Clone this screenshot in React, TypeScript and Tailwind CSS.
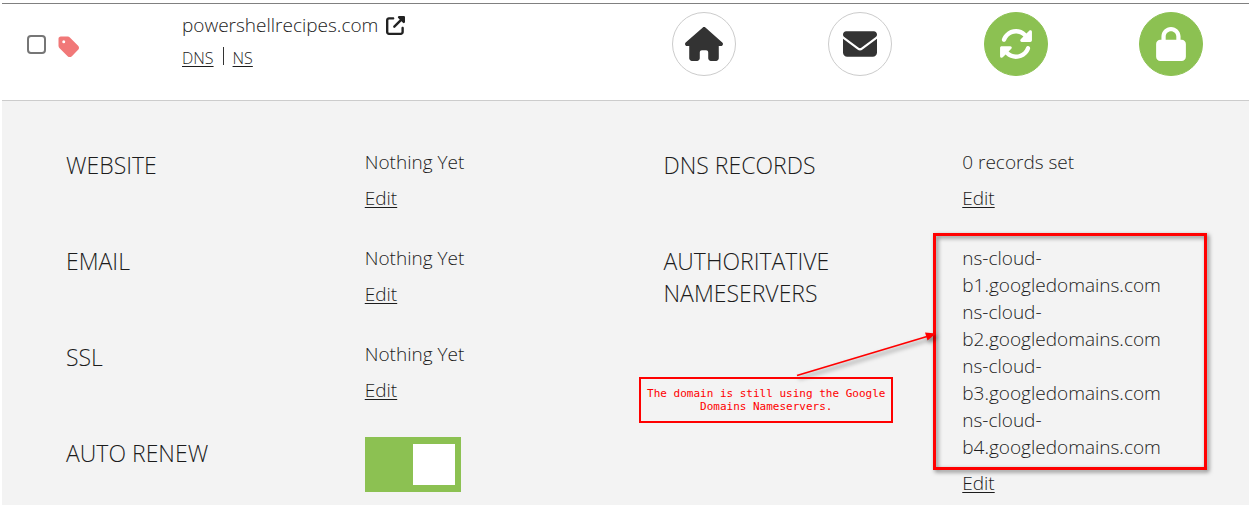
import { useState, type ReactNode } from "react";
import {
  FaEnvelope,
  FaHouse,
  FaLock,
  FaRotate,
  FaTag,
  FaUpRightFromSquare,
} from "react-icons/fa6";

const nameservers = [
  "ns-cloud-b1.googledomains.com",
  "ns-cloud-b2.googledomains.com",
  "ns-cloud-b3.googledomains.com",
  "ns-cloud-b4.googledomains.com",
];

function Shortcut({ label, filled, children }: { label: string; filled?: boolean; children: ReactNode }) {
  const tone = filled ? "border-[#8cc152] bg-[#8cc152] text-white" : "border-[#cccccc] bg-white text-[#333333]";
  return (
    <div className="flex flex-1 justify-center">
      <button
        type="button"
        aria-label={label}
        className={`flex size-16 items-center justify-center rounded-full border ${tone}`}
      >
        {children}
      </button>
    </div>
  );
}

function Row({ title, children }: { title: string; children: ReactNode }) {
  return (
    <section className="grid min-h-24 grid-cols-2 gap-x-19 last:min-h-0">
      <h2 className="text-[23px] leading-8">{title}</h2>
      <div className="text-[19px] leading-[27px]">{children}</div>
    </section>
  );
}

function Edit({ label }: { label: string }) {
  return (
    <a href="#edit" aria-label={`Edit ${label}`} className="mt-[9px] block w-fit underline underline-offset-2">
      Edit
    </a>
  );
}

export default function App() {
  const [selected, setSelected] = useState(false);
  const [autoRenew, setAutoRenew] = useState(true);

  return (
    <main className="ml-0.5 min-h-screen bg-[#f3f3f3] font-['Open_Sans',sans-serif] font-light text-[#1c1c1c]">
      <div className="bg-white pt-[3px]">
        <header className="flex border-t border-b border-t-[#808080] border-b-[#cccccc] bg-white pt-2 pb-6">
          <div className="flex w-1/2">
            <div className="flex w-[180px] gap-[11px] pt-[23px] pl-[25px]">
              <input
                type="checkbox"
                aria-label="Select powershellrecipes.com"
                checked={selected}
                onChange={(e) => setSelected(e.target.checked)}
                className="size-[19px] appearance-none rounded-[4px] border-2 border-[#767676] bg-white checked:bg-[#767676]"
              />
              <FaTag className="size-6 text-[#f17878]" />
            </div>
            <div>
              <a href="#domain" className="flex items-center gap-2 text-[19px] leading-[27px]">
                powershellrecipes.com
                <FaUpRightFromSquare className="size-[19px] text-[#222222]" />
              </a>
              <nav className="mt-[3px] flex items-center gap-[9px] text-base leading-8">
                <a href="#dns" className="underline underline-offset-2">DNS</a>
                <span className="-mt-1 h-[18px] w-px bg-[#333333]" />
                <a href="#ns" className="underline underline-offset-2">NS</a>
              </nav>
            </div>
          </div>
          <div className="flex w-1/2 pl-px">
            <Shortcut label="Website"><FaHouse className="h-[34px] w-[38px]" /></Shortcut>
            <Shortcut label="Email"><FaEnvelope className="size-[34px]" /></Shortcut>
            <Shortcut label="Auto renew" filled><FaRotate className="size-[34px]" /></Shortcut>
            <Shortcut label="Lock" filled><FaLock className="size-[34px]" /></Shortcut>
          </div>
        </header>
      </div>

      <div className="grid grid-cols-2 gap-x-19 px-16 pt-12">
        <div>
          <Row title="WEBSITE"><p>Nothing Yet</p><Edit label="website" /></Row>
          <Row title="EMAIL"><p>Nothing Yet</p><Edit label="email" /></Row>
          <Row title="SSL"><p>Nothing Yet</p><Edit label="SSL" /></Row>
          <Row title="AUTO RENEW">
            <button
              type="button"
              role="switch"
              aria-checked={autoRenew}
              aria-label="Auto renew"
              onClick={() => setAutoRenew(!autoRenew)}
              className={`flex h-[55px] w-24 items-center px-1.5 ${autoRenew ? "justify-end bg-[#8cc152]" : "justify-start bg-[#cccccc]"}`}
            >
              <span className="h-[41px] w-[42px] bg-white" />
            </button>
          </Row>
        </div>
        <div>
          <Row title="DNS RECORDS"><p>0 records set</p><Edit label="DNS records" /></Row>
          <Row title="AUTHORITATIVE NAMESERVERS">
            <div className="relative">
              <ul>
                {nameservers.map((ns) => (
                  <li key={ns}>{ns}</li>
                ))}
              </ul>
              <div className="absolute -top-3 -left-[29px] h-[237px] w-[274px] border-3 border-[#ff0000] drop-shadow-[2px_2px_2px_rgba(0,0,0,0.5)]" />
              <svg
                aria-hidden="true"
                viewBox="0 0 144 50"
                className="absolute top-[84px] -left-[169px] h-[50px] w-36 drop-shadow-[2px_3px_2px_rgba(0,0,0,0.5)]"
              >
                <path d="M4 46.5 L134 7.5" stroke="#ff0000" strokeWidth="1.8" />
                <path d="M143 4.5 L132 3.5 L134.5 11.5 Z" fill="#ff0000" />
              </svg>
              <p className="absolute top-[132px] -left-[323px] w-[254px] border-2 border-[#ff0000] py-2 text-center font-['DejaVu_Sans_Mono',monospace] text-[11px] leading-[13px] font-normal text-[#ff0000]">
                The domain is still using the Google Domains Nameservers.
              </p>
            </div>
            <Edit label="nameservers" />
          </Row>
        </div>
      </div>
    </main>
  );
}
